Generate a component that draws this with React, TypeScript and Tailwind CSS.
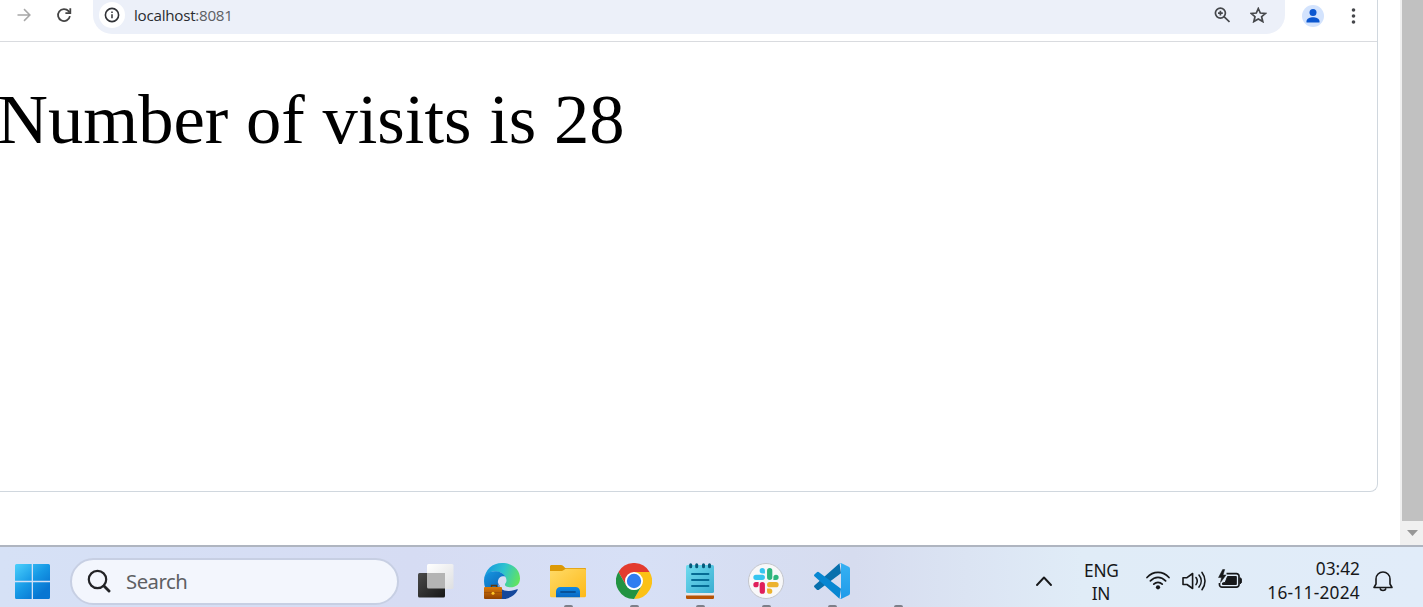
import type { ReactNode } from "react";

function ForwardIcon() {
  return (
    <svg className="size-4 shrink-0" viewBox="0 0 16 16" fill="none" stroke="#a8a8a8" strokeWidth="1.5">
      <path d="M1.5 8h12.3M8 2.1 13.9 8 8 13.9" />
    </svg>
  );
}

function ReloadIcon() {
  return (
    <svg className="size-4 shrink-0" viewBox="0 0 16 16" fill="none" stroke="#444" strokeWidth="1.8">
      <path d="M13.9 9.2A6 6 0 1 1 12.6 4.2l1 1.3" />
      <path d="M14.3 1.3v4.9H9.4" />
    </svg>
  );
}

function InfoIcon() {
  return (
    <svg className="size-4" viewBox="0 0 16 16" fill="none" stroke="#303236">
      <circle cx="8" cy="8" r="6.6" strokeWidth="1.6" />
      <path d="M8 7.2v4M8 4.4v1.5" strokeWidth="1.5" />
    </svg>
  );
}

function ZoomIcon() {
  return (
    <svg className="size-4" viewBox="0 0 16 16" fill="none" stroke="#45474b" strokeWidth="1.7">
      <circle cx="6.4" cy="6.1" r="5" />
      <path d="m10 9.700 5.500 5.300M6.400 3.700v4.800M4 6.100h4.800" />
    </svg>
  );
}

function StarIcon() {
  return (
    <svg className="h-4 w-[17px]" viewBox="0 0 17 16" fill="none" stroke="#45474b" strokeWidth="1.7">
      <path d="m8.300 1.500 2 4.500 5.100.5-3.800 3.200 1.200 4.900-4.500-2.600-4.500 2.600L5 9.700 1.200 6.500l5.100-.5z" />
    </svg>
  );
}

function ProfileIcon() {
  return (
    <svg className="size-[22px]" viewBox="0 0 22 22">
      <circle cx="11" cy="11" r="11" fill="#d3e3fd" />
      <circle cx="11" cy="7.600" r="3.500" fill="#0b57d0" />
      <path d="M4.500 17.500v-1.300c0-2.500 3.700-3.900 6.500-3.900s6.500 1.400 6.500 3.900v1.300z" fill="#0b57d0" />
    </svg>
  );
}

function Toolbar() {
  return (
    <div className="flex h-[42px] shrink-0 items-start border-b border-[#d9dbdf] pl-4">
      <div className="flex h-[30px] items-center gap-6">
        <ForwardIcon />
        <ReloadIcon />
      </div>
      <div className="ml-[21px] flex h-[34px] w-[1192px] items-start rounded-b-[19px] bg-[#ecf0f9]">
        <div className="flex h-[30px] w-full items-center pr-[18px] pl-1.5">
          <div className="flex size-[26px] items-center justify-center rounded-full bg-white">
            <InfoIcon />
          </div>
          <span className="ml-[9px] font-['Open_Sans',sans-serif] text-[15.2px] leading-5 tracking-[-0.26px] text-[#292b30]">
            localhost<span className="text-[#5c5e63]">:8081</span>
          </span>
          <div className="ml-auto flex items-center gap-5">
            <ZoomIcon />
            <StarIcon />
          </div>
        </div>
      </div>
      <div className="ml-[17px] flex h-[31px] items-center gap-[26px]">
        <ProfileIcon />
        <svg className="h-4 w-5" viewBox="0 0 20 16" fill="#45474b">
          <circle cx="3.500" cy="2" r="1.800" />
          <circle cx="3.500" cy="8" r="1.800" />
          <circle cx="3.500" cy="14" r="1.800" />
        </svg>
      </div>
    </div>
  );
}

function Scrollbar() {
  return (
    <div className="flex w-[23px] flex-col bg-[#f0f0f0]">
      <div className="ml-0.5 h-[521px] bg-[#c1c1c1]" />
      <svg className="h-6 w-[23px]" viewBox="0 0 23 24">
        <path d="M7 9h11l-5.500 6z" fill="#979797" />
      </svg>
    </div>
  );
}

function WindowsLogo() {
  return (
    <svg className="mt-2 size-[35px] shrink-0" viewBox="0 0 35 35">
      <defs>
        <linearGradient id="win" gradientUnits="userSpaceOnUse" x1="0" y1="0" x2="31" y2="35">
          <stop stopColor="#4cd0fc" />
          <stop offset=".5" stopColor="#1698e5" />
          <stop offset=".85" stopColor="#0876d2" />
        </linearGradient>
      </defs>
      <path
        fill="url(#win)"
        d="M1.5 0h15.200v16.700H0v-15.200A1.500 1.500 0 0 1 1.500 0M18 0h15.500A1.500 1.500 0 0 1 35 1.500V16.700H18zM0 18.200h16.700V35h-15.200A1.500 1.500 0 0 1 0 33.500zM18 18.200h17v15.300a1.500 1.500 0 0 1-1.500 1.500H18z"
      />
    </svg>
  );
}

function SearchBox() {
  return (
    <div className="mt-2 ml-5 flex h-[47px] w-[329px] shrink-0 items-center rounded-full border-2 border-[#c7cfe3] bg-[#f3f6fd] pl-[15px]">
      <svg className="size-6" viewBox="0 0 24 24" fill="none" stroke="#222326" strokeLinecap="round">
        <circle cx="10.500" cy="10.500" r="8.700" strokeWidth="2.200" />
        <path d="m17 17 5 5" strokeWidth="2.900" />
      </svg>
      <span className="ml-[15px] font-['Noto_Sans',sans-serif] text-[20.300px] leading-6 tracking-[-0.5px] text-[#5e6064]">
        Search
      </span>
    </div>
  );
}

function TaskViewIcon() {
  return (
    <svg className="size-9" viewBox="0 0 36 36">
      <defs>
        <linearGradient id="tvDark" x1="0" y1="0" x2="1" y2="1">
          <stop stopColor="#4a4a4a" />
          <stop offset="1" stopColor="#171717" />
        </linearGradient>
        <linearGradient id="tvLight" x1="0" y1="0" x2="1" y2="1">
          <stop stopColor="#fff" />
          <stop offset="1" stopColor="#dedfe1" />
        </linearGradient>
      </defs>
      <rect x="9" y="1" width="26.500" height="25" rx="1.500" fill="url(#tvLight)" />
      <rect x="0" y="10" width="27" height="24.500" rx="1.500" fill="url(#tvDark)" />
      <path d="M9 10h18v15.500H10.500A1.500 1.500 0 0 1 9 24z" fill="#b4b4b4" />
    </svg>
  );
}

function EdgeIcon() {
  return (
    <svg className="size-9" viewBox="0 0 36 36">
      <defs>
        <linearGradient id="edgeTop" x1="0" y1=".35" x2="1" y2=".6">
          <stop stopColor="#1698df" />
          <stop offset=".5" stopColor="#2dc3cf" />
          <stop offset="1" stopColor="#63e45e" />
        </linearGradient>
        <linearGradient id="edgeLeft" x1="0" y1="0" x2=".6" y2="1">
          <stop stopColor="#1798e1" />
          <stop offset="1" stopColor="#075bb0" />
        </linearGradient>
        <linearGradient id="edgeCase" x1="0" y1="0" x2="0" y2="1">
          <stop stopColor="#d97a0b" />
          <stop offset="1" stopColor="#914100" />
        </linearGradient>
      </defs>
      <path d="M0 17C1 6.500 8.500 0 18 0c11 0 18 7 18 15.500 0 6-4.500 8.800-9.300 8.800-3.200 0-5.800-1-5.800-2.600 0-1.200 1.600-1.700 1.600-4.100 0-5-5.500-9.300-12-9.300C5.500 8.300 1.500 12 0 17z" fill="url(#edgeTop)" />
      <path d="M0 18C0 11.500 5 8.300 10.500 8.300c5 0 9 2 11 5.500-1-.5-2-.6-3-.5-3.200.4-5 3.500-4.500 7.200.5 5 3.500 9 8 11V36h-4C7.500 36 0 28 0 18z" fill="url(#edgeLeft)" />
      <path d="M14 19.500C14.800 25 19 28.300 25 28c3.500-.2 6-1.200 8-1.800.8-.2 1 .2.700.8C31 32.500 25.500 36 18 36v-8z" fill="#15489b" />
      <path d="M7.500 24v-1.500h5V24" fill="none" stroke="#5b3810" strokeWidth="1.400" />
      <rect y="24" width="18" height="12" rx="1" fill="url(#edgeCase)" />
      <path d="M0 29.500h18" stroke="#8a4308" strokeWidth=".5" />
      <circle cx="9" cy="30.300" r="1.500" fill="#ffc629" />
    </svg>
  );
}

function FolderIcon() {
  return (
    <svg className="size-9" viewBox="0 0 36 36">
      <defs>
        <linearGradient id="folder" x1="0" y1="0" x2="1" y2="1">
          <stop stopColor="#ffdb68" />
          <stop offset="1" stopColor="#fdb918" />
        </linearGradient>
        <linearGradient id="folderTray" x1="0" y1="0" x2="0" y2="1">
          <stop stopColor="#128ae2" />
          <stop offset="1" stopColor="#0867c3" />
        </linearGradient>
      </defs>
      <path d="M0 3.500C0 2.500.8 2 1.500 2h9.300c1 0 1.800.3 2.500 1l1.900 2H35a1 1 0 0 1 1 1v4H0z" fill="#dc9906" />
      <path d="M0 8h10.500c1.700 0 2.700-.4 3.700-1.200l1.500-1.100H34.500A1.500 1.500 0 0 1 36 7.200v25.500A1.600 1.600 0 0 1 34.400 34.300H1.600A1.600 1.600 0 0 1 0 32.700z" fill="url(#folder)" />
      <path d="M6 34.300v-6A4.300 4.300 0 0 1 10.300 24h15.400a4.300 4.300 0 0 1 4.300 4.300v6z" fill="url(#folderTray)" />
      <path d="M11 29h14" stroke="#075199" strokeWidth="1.800" strokeLinecap="round" />
    </svg>
  );
}

function ChromeIcon() {
  return (
    <svg className="size-9" viewBox="0 0 36 36">
      <path d="M2.400 9a18 18 0 0 1 31.200 0H18l-7.800 13.500z" fill="#e33b2e" />
      <path d="M33.600 9A18 18 0 0 1 18 36l7.800-13.500L18 9z" fill="#fbc116" />
      <path d="M18 36A18 18 0 0 1 2.400 9l7.800 13.500a9 9 0 0 0 15.600 0z" fill="#229342" />
      <circle cx="18" cy="18" r="9" fill="white" />
      <circle cx="18" cy="18" r="7.200" fill="#2f7df0" />
    </svg>
  );
}

function NotepadIcon() {
  return (
    <svg className="size-9" viewBox="0 0 36 36">
      <defs>
        <linearGradient id="note" x1="0" y1="0" x2="1" y2="1">
          <stop stopColor="#70dcef" />
          <stop offset="1" stopColor="#3aadd1" />
        </linearGradient>
      </defs>
      <rect x="4" y="29" width="28" height="7" rx="1.200" fill="#b65305" />
      <path d="M4 29h28v3.500H4z" fill="#e9e7e7" />
      <rect x="4" y="2" width="28" height="28" rx="1.500" fill="url(#note)" />
      <path d="M10 11h16.500M10 17h16.500M10 23h16.500" stroke="#056b94" strokeWidth="1.900" strokeLinecap="round" />
      <path d="M8.700 1.700v2M14.700 1.700v2M21.500 1.700v2M27.500 1.700v2" stroke="#07597a" strokeWidth="3" strokeLinecap="round" />
    </svg>
  );
}

function SlackIcon() {
  return (
    <svg className="size-9" viewBox="0 0 36 36">
      <circle cx="18" cy="18" r="17.500" fill="#f8f8f9" stroke="#c3c5cb" />
      <g transform="translate(-1 -1) scale(1.055)">
        <path d="M17 10.800h-2.500A2.500 2.500 0 1 1 17 8.300zM8.500 12H14.500a2.500 2.500 0 0 1 0 5h-6a2.500 2.500 0 0 1 0-5" fill="#36c5f0" />
        <path d="M25 17v-2.500A2.500 2.500 0 1 1 27.500 17zM24 8.300v6.200a2.500 2.500 0 0 1-5 0V8.300a2.500 2.500 0 0 1 5 0" fill="#2eb67d" />
        <path d="M19 25.200h2.500a2.500 2.500 0 1 1-2.500 2.500zM27.500 24h-6a2.500 2.500 0 0 1 0-5h6a2.500 2.500 0 0 1 0 5" fill="#ecb22e" />
        <path d="M11 19v2.500A2.500 2.500 0 1 1 8.500 19zM12 27.700v-6.200a2.500 2.500 0 0 1 5 0v6.200a2.500 2.500 0 0 1-5 0" fill="#e01e5a" />
      </g>
    </svg>
  );
}

function VsCodeIcon() {
  return (
    <svg className="size-9" viewBox="0 0 36 36">
      <defs>
        <linearGradient id="codeFin" x1="0" y1="0" x2="0" y2="1">
          <stop stopColor="#35b1f3" />
          <stop offset="1" stopColor="#209be9" />
        </linearGradient>
      </defs>
      <path d="M25.500.3 27 10.200 5.300 26.500a2 2 0 0 1-2.700-.1L.7 24.600a1.600 1.600 0 0 1 0-2.400z" fill="#0870ad" />
      <path d="m.7 11.200 1.900-1.700a2 2 0 0 1 2.700-.1L27 25.800 25.500 35.700.7 13.600a1.600 1.600 0 0 1 0-2.400" fill="#0787d2" />
      <path d="M25.500.3a1.800 1.800 0 0 1 2 0l7.200 3.400A2.200 2.200 0 0 1 36 5.700v24.600a2.200 2.200 0 0 1-1.300 2l-7.200 3.400a1.800 1.800 0 0 1-2 0c.9.400 1.500-.3 1.500-1.200V1.500c0-.9-.6-1.600-1.500-1.200" fill="url(#codeFin)" />
    </svg>
  );
}

function TaskButton({ running = false, children }: { running?: boolean; children?: ReactNode }) {
  return (
    <div className="flex h-full w-[66px] shrink-0 flex-col items-center pt-4">
      <div className="size-9">{children}</div>
      {running && <div className="mt-1.5 h-0.5 w-[9px] rounded-t-sm bg-[#7c7f89]" />}
    </div>
  );
}

function TrayIcons() {
  return (
    <div className="ml-7 flex items-center gap-3">
      <svg className="size-6" viewBox="0 0 24 24" fill="none" stroke="#17181a" strokeWidth="1.700" strokeLinecap="round">
        <path d="M1 8.500C7.200 1.600 16.800 1.600 23 8.500M4.400 11.900c4.500-4.700 10.700-4.700 15.200 0M7.800 15.200c2.500-2.500 5.900-2.500 8.400 0" />
        <circle cx="12" cy="18.300" r="2.100" fill="#17181a" stroke="none" />
      </svg>
      <svg className="size-6" viewBox="0 0 24 24" fill="none" stroke="#17181a" strokeWidth="1.600" strokeLinecap="round" strokeLinejoin="round">
        <path d="M1 8.700h4l5.600-4.200v15L5 15.500H1zM14 8.500c1.500 2.100 1.500 5 0 7.100M17 6c2.900 3.600 2.900 8.500 0 12.100M20 3.400c4 5.200 4 12.100 0 17.300" />
      </svg>
      <svg className="size-6" viewBox="0 0 24 24" fill="none" stroke="#17181a">
        <path d="M8.500 4.700h10A2.500 2.500 0 0 1 21 7.200v8.500a2.500 2.500 0 0 1-2.500 2.500H4a2.500 2.500 0 0 1-2.500-2.500V14" strokeWidth="1.700" />
        <path d="M9.500 7.500h8.800v8H4.500V14l2.700-.5z" fill="#17181a" />
        <path d="M22 8.800c2.400.5 2.400 5.400 0 5.900z" fill="#17181a" />
        <path d="M4.700.5.500 8.500h3l-1 5L8 6H5L6.700.5z" fill="#17181a" strokeWidth=".5" />
      </svg>
    </div>
  );
}

function Taskbar() {
  return (
    <footer className="flex h-[62px] w-full shrink-0 items-center overflow-hidden border-t-2 border-[#afb5c0] bg-[linear-gradient(90deg,#d6e1f6_0%,#d6dcf3_29%,#d7e0f6_45%,#d6dcef_60%,#dbe4f3_68%,#e0ecf7_76%,#e1ecf9_100%)] pl-[15px] font-['Noto_Sans',sans-serif] text-[#17181a]">
      <WindowsLogo />
      <SearchBox />
      <nav className="ml-1 flex h-full w-[528px] shrink-0">
        <TaskButton><TaskViewIcon /></TaskButton>
        <TaskButton><EdgeIcon /></TaskButton>
        <TaskButton running><FolderIcon /></TaskButton>
        <TaskButton running><ChromeIcon /></TaskButton>
        <TaskButton running><NotepadIcon /></TaskButton>
        <TaskButton running><SlackIcon /></TaskButton>
        <TaskButton running><VsCodeIcon /></TaskButton>
        <TaskButton running />
      </nav>
      <div className="ml-[105px] flex h-full shrink-0 items-start">
        <div className="flex h-[67px] items-center">
          <svg className="h-3 w-4" viewBox="0 0 16 12" fill="none" stroke="#17181a" strokeWidth="1.900" strokeLinecap="round" strokeLinejoin="round">
            <path d="m1 10 7-7.500 7 7.500" />
          </svg>
          <div className="ml-8 w-[34px] pt-0.5 text-center text-[17.300px] leading-[23px] tracking-[-0.200px] whitespace-nowrap">
            <p>ENG</p>
            <p>IN</p>
          </div>
          <TrayIcons />
          <div className="ml-[18px] w-[100px] text-right whitespace-nowrap">
            <p className="text-[17.300px] leading-6">03:42</p>
            <p className="text-[17.300px] leading-6 tracking-[0.250px]">16-11-2024</p>
          </div>
          <svg className="ml-3 h-6 w-[22px]" viewBox="0 0 22 24" fill="none" stroke="#17181a" strokeWidth="1.600" strokeLinejoin="round">
            <path d="M4 10a7 7 0 0 1 14 0v5l2 3.500H2L4 15zM8 19.500a3.100 2.700 0 0 0 6 0" />
          </svg>
        </div>
      </div>
    </footer>
  );
}

export default function App() {
  return (
    <div className="flex h-[607px] w-[1423px] flex-col overflow-hidden bg-white">
      <div className="flex h-[545px] shrink-0 justify-between">
        <main className="flex h-[492px] w-[1378px] flex-col overflow-hidden rounded-br-lg border-r border-b border-[#d0d7de]">
          <Toolbar />
          <p className="-ml-[3px] pt-[37px] font-['Liberation_Serif',serif] text-[70.600px] leading-[80px] whitespace-nowrap text-black">
            Number of visits is 28
          </p>
        </main>
        <Scrollbar />
      </div>
      <Taskbar />
    </div>
  );
}
